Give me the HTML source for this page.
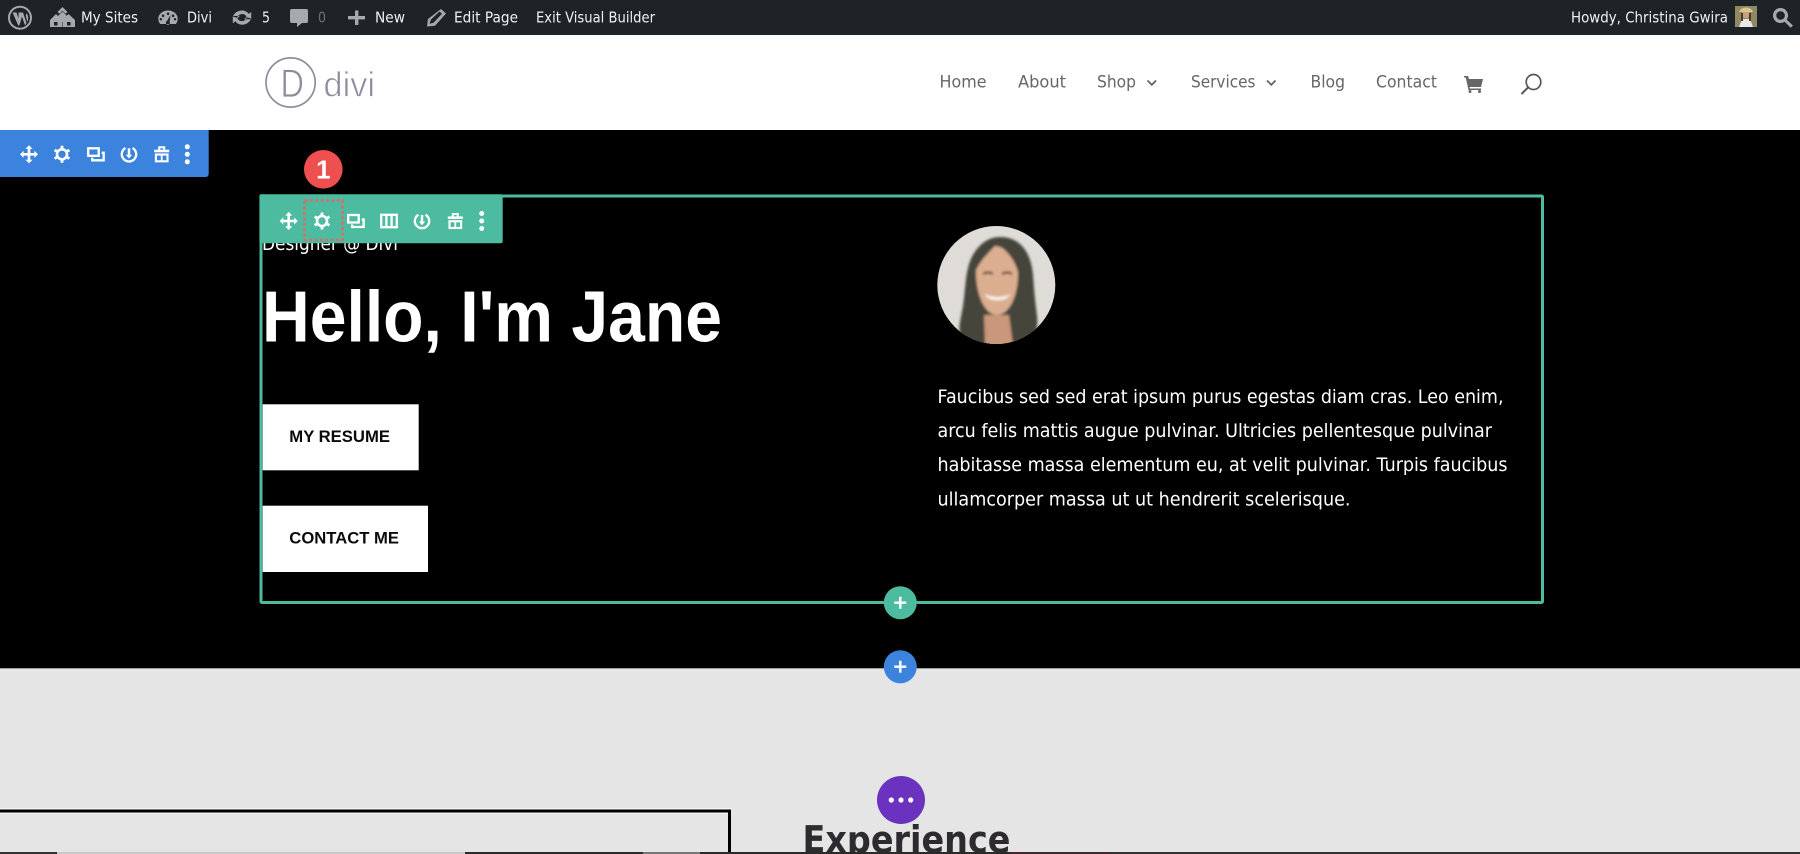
<!DOCTYPE html>
<html lang="en"><head><meta charset="utf-8"><title>Divi Visual Builder</title>
<style>
html,body{margin:0;padding:0;background:#e6e5e6;width:1800px;height:854px;overflow:hidden}
svg{display:block;position:absolute;left:0;top:0}
text{font-family:"DejaVu Sans","Liberation Sans",sans-serif}
.lib{font-family:"Liberation Sans",sans-serif}
.ab{font-size:15px;fill:#f0f0f1}
.nav{font-size:17px;fill:#666}
.p{font-size:19px;fill:#fff}
.ic{fill:none;stroke:#fff;stroke-width:2.3}
</style></head><body>
<svg width="1800" height="854" viewBox="0 0 1800 854" xmlns="http://www.w3.org/2000/svg">
<defs>
<g id="mv"><path d="M-6 0H6M0-6V6" stroke="#fff" stroke-width="2.6" fill="none"/><path fill="#fff" d="M-9 0l3.6-3.6v7.2zM9 0L5.400-3.600v7.200zM0-9L-3.600-5.400h7.200zM0 9L-3.600 5.400h7.200z"/></g>
<g id="gr"><circle r="5" class="ic" style="stroke-width:2.600"/><path stroke="#fff" stroke-width="2.800" d="M0-8.500V-5M0 8.500V5M-7.400-4.300L-4.300-2.500M7.400-4.300L4.300-2.500M-7.400 4.300L-4.300 2.500M7.400 4.300L4.300 2.500"/></g>
<g id="cp" class="ic"><rect x="-7.500" y="-6" width="10.500" height="7.500"/><path d="M6-1.500H8V6H-3.500V3.500"/></g>
<g id="cl" class="ic"><rect x="-7.800" y="-6.200" width="15.600" height="12.400"/><path d="M-2.600-6V6M2.600-6V6"/></g>
<g id="pw"><path class="ic" d="M-3.500-6.300A7.200 7.200 0 1 0 3.500-6.300"/><path d="M0-6V1" stroke="#fff" stroke-width="2.500"/><path d="M-3.200 0.500H3.200L0 4.200z" fill="#fff"/></g>
<g id="tr"><path d="M-7.500-3.300H7.500" stroke="#fff" stroke-width="2.600"/><path d="M-2.500-4V-7H2.500V-4" class="ic" style="stroke-width:2"/><rect x="-5.800" y="0.200" width="11.600" height="6.800" class="ic" style="stroke-width:2.100"/><path d="M0 0V7" stroke="#fff" stroke-width="1.800"/></g>
<g id="dt" fill="#fff"><circle cy="-7.500" r="2.500"/><circle r="2.500"/><circle cy="7.500" r="2.500"/></g>
<clipPath id="av"><circle cx="996.300" cy="285" r="59"/></clipPath>
<filter id="sf" x="-10%" y="-10%" width="120%" height="120%"><feGaussianBlur stdDeviation="1.300"/></filter>
</defs>

<!-- page -->
<rect width="1800" height="854" fill="#e6e5e6"/>
<rect y="35" width="1800" height="95" fill="#fff"/>
<rect y="130" width="1800" height="538.300" fill="#000"/>
<rect width="1800" height="35" fill="#1d2327"/>

<!-- admin bar icons -->
<g fill="#a7aaad">
<circle cx="20" cy="17.700" r="11" fill="none" stroke="#a7aaad" stroke-width="2"/>
<path d="M12.500 12.500h4l3.500 11-1.500 2.500zM18.500 12.500h4.500l3.500 10.500-1.500 2.500-3-9-2.500 8.500-1 .5zM26.500 13c2 3 2.200 6 .8 9l-1.500-6.500z"/>
<path d="M62.500 7l5 5-2 1.800-3-3-3 3-2-1.800z"/>
<path d="M50 20l6-6 6 6v7H50z"/><path d="M62.500 20l6-6 6.500 6v7H62.500z"/><path d="M57 17l5.500-5.500 5.500 5.500-5.500 5z"/>
<rect x="54" y="22" width="3.500" height="3.500" fill="#1d2327"/><rect x="67" y="22" width="3.500" height="3.500" fill="#1d2327"/>
<path fill-rule="evenodd" d="M168 10.500a9.700 8 0 0 1 9.700 8c0 2.500-.8 4.200-2 5.500h-15.400c-1.200-1.300-2-3-2-5.500a9.700 8 0 0 1 9.700-8zM163 14.500a1.300 1.300 0 1 0 .1 0zM168 12.500a1.300 1.300 0 1 0 .1 0zM173 14.500a1.300 1.300 0 1 0 .1 0zM160.800 18a1.200 1.200 0 1 0 .1 0zM175 18a1.200 1.200 0 1 0 .1 0zM170.500 15l-3.500 6a2 2 0 1 0 2.600.8z"/>
<path fill-rule="evenodd" d="M242 10.500c2.800 0 5.200 1.300 6.600 3.400l2.600-1.900v7.200h-7l2.400-2.200a5 5 0 0 0-9.400.8l-4.200-1c1-3.700 4.600-6.300 9-6.300zM242 24.700c-2.800 0-5.200-1.300-6.600-3.400l-2.600 1.900v-7.200h7l-2.400 2.200a5 5 0 0 0 9.400-.8l4.200 1c-1 3.700-4.600 6.300-9 6.300z"/>
<path d="M292 9h14a2 2 0 0 1 2 2v10a2 2 0 0 1-2 2h-4l-5 4v-4h-5a2 2 0 0 1-2-2V11a2 2 0 0 1 2-2z"/>
<path d="M355 10.500h3.400v5.500h6.600v3.400h-6.600v5.600H355v-5.600h-7V16h7z"/>
<path fill-rule="evenodd" d="M441 9l5 4.500-11 12.200-8 .8 1-7.500zM431 19.500l-1.500 4.200 4-1 8.500-9-2.500-2.200z"/>
<path d="M1780.500 8a7.500 7.500 0 0 1 6.200 11.700l6.300 5.800-2.300 2.200-6-6A7.500 7.500 0 1 1 1780.500 8zm0 3.200a4.300 4.300 0 1 0 .1 0z" fill-rule="evenodd"/>
</g>
<text class="ab" x="81" y="22.700" textLength="57" lengthAdjust="spacingAndGlyphs">My Sites</text>
<text class="ab" x="187" y="22.700" textLength="25" lengthAdjust="spacingAndGlyphs">Divi</text>
<text class="ab" x="262" y="22.700" textLength="8" lengthAdjust="spacingAndGlyphs">5</text>
<text class="ab" x="318" y="22.700" textLength="8" lengthAdjust="spacingAndGlyphs" style="fill:#6c7175">0</text>
<text class="ab" x="375" y="22.700" textLength="30" lengthAdjust="spacingAndGlyphs">New</text>
<text class="ab" x="454" y="22.700" textLength="64" lengthAdjust="spacingAndGlyphs">Edit Page</text>
<text class="ab" x="536" y="22.700" textLength="119" lengthAdjust="spacingAndGlyphs">Exit Visual Builder</text>
<text class="ab" x="1571" y="22.700" textLength="157" lengthAdjust="spacingAndGlyphs">Howdy, Christina Gwira</text>
<rect x="1735" y="6" width="22" height="21" fill="#8f8a62"/>
<path d="M1739 27l3-8h8l3 8z" fill="#e8e8ea"/><circle cx="1746" cy="14" r="4.200" fill="#c99f7d"/><path d="M1739 12c2-6 12-6 14 0z" fill="#d9c58e"/><path d="M1741 13v8h2v-8zM1749 13v8h2v-8z" fill="#4a3a2c"/>

<!-- logo -->
<circle cx="290.600" cy="82.500" r="24.600" fill="none" stroke="#8d8f9f" stroke-width="1.700"/>
<text class="lib" x="280.500" y="97.200" font-size="40" fill="#8d8f9f" stroke="#fff" stroke-width=".7" textLength="23.500" lengthAdjust="spacingAndGlyphs">D</text>
<text class="lib" x="323.500" y="96.700" font-size="35" fill="#8d8f9f" stroke="#fff" stroke-width=".7" textLength="51.500" lengthAdjust="spacingAndGlyphs">divi</text>

<!-- nav -->
<text class="nav" x="939.500" y="87.700" textLength="47" lengthAdjust="spacingAndGlyphs">Home</text>
<text class="nav" x="1018" y="87.700" textLength="48" lengthAdjust="spacingAndGlyphs">About</text>
<text class="nav" x="1097" y="87.700" textLength="39" lengthAdjust="spacingAndGlyphs">Shop</text>
<path d="M1147.500 80.500l4.300 4.300 4.300-4.300" fill="none" stroke="#666" stroke-width="1.800"/>
<text class="nav" x="1191" y="87.700" textLength="64.500" lengthAdjust="spacingAndGlyphs">Services</text>
<path d="M1267 80.500l4.300 4.300 4.300-4.300" fill="none" stroke="#666" stroke-width="1.800"/>
<text class="nav" x="1310.500" y="87.700" textLength="34.500" lengthAdjust="spacingAndGlyphs">Blog</text>
<text class="nav" x="1376" y="87.700" textLength="61" lengthAdjust="spacingAndGlyphs">Contact</text>
<path fill="#666" d="M1464 76h4l1 3h14l-2 8h-11.500l.4 1.500H1481v1.500h-12.500l-2.800-12.500H1464z"/><circle cx="1470" cy="91.500" r="1.500" fill="#666"/><circle cx="1479.500" cy="91.500" r="1.500" fill="#666"/>
<ellipse cx="1533.500" cy="82" rx="7.300" ry="7.500" fill="none" stroke="#555" stroke-width="1.700"/><path d="M1528 87.500l-6.500 6.500" stroke="#555" stroke-width="2"/>

<!-- hero -->
<text class="p" x="262" y="250" textLength="136" lengthAdjust="spacingAndGlyphs">Designer @ Divi</text>
<text class="lib" x="262" y="341.700" font-size="72" font-weight="700" fill="#fff" textLength="460" lengthAdjust="spacingAndGlyphs">Hello, I'm Jane</text>
<rect x="262.700" y="404.300" width="156" height="66" fill="#fff"/>
<rect x="262.700" y="505.700" width="165.300" height="66.300" fill="#fff"/>
<text class="lib" x="289.300" y="442" font-size="16.500" font-weight="700" fill="#0a0a0a" textLength="100.700" lengthAdjust="spacingAndGlyphs">MY RESUME</text>
<text class="lib" x="289.300" y="543.700" font-size="16.500" font-weight="700" fill="#0a0a0a" textLength="109.700" lengthAdjust="spacingAndGlyphs">CONTACT ME</text>

<!-- avatar -->
<g clip-path="url(#av)">
<rect x="930" y="220" width="140" height="130" fill="#dfdcd8"/>
<g filter="url(#sf)">
<path d="M955 335c3-8 20-10 42-10s38 4 45 12l-4 14h-80z" fill="#e6e0da"/>
<path d="M960 340c-2-14 1-22 3-34 2-12 2-26 5-38 4-17 16-31 32-31 20 0 31 15 33 38 1 14 2 26 4 40 1 11 0 18-6 24-8 8-16 10-34 10-16 0-30-2-37-9z" fill="#45443a"/>
<path d="M984 315h25l4 30-14 5-14-6z" fill="#c9977a"/>
<path d="M976 272c0-15 8-24 20-26 10 2 22 10 22 28 0 22-9 41-21 41-13 0-21-22-21-43z" fill="#dcae90"/>
<path d="M976 270c5-10 13-18 19-24l-10-2-9 12zM1018 272c-4-14-12-22-20-27 8-1 14 2 18 8z" fill="#45443a"/>
<path d="M983 274c3-2 7-2 10 0M1002 274c3-2 7-2 10 0" stroke="#5a4436" stroke-width="2.200" fill="none"/>
<path d="M985 294c8 4 18 4 25 0-2 8-22 9-25 0z" fill="#f7f2ee"/>
</g>
</g>

<!-- paragraph -->
<text class="p" x="937.500" y="403" textLength="566" lengthAdjust="spacingAndGlyphs">Faucibus sed sed erat ipsum purus egestas diam cras. Leo enim,</text>
<text class="p" x="937.500" y="437" textLength="554.500" lengthAdjust="spacingAndGlyphs">arcu felis mattis augue pulvinar. Ultricies pellentesque pulvinar</text>
<text class="p" x="937.500" y="471" textLength="570" lengthAdjust="spacingAndGlyphs">habitasse massa elementum eu, at velit pulvinar. Turpis faucibus</text>
<text class="p" x="937.500" y="505.400" textLength="413" lengthAdjust="spacingAndGlyphs">ullamcorper massa ut ut hendrerit scelerisque.</text>

<!-- row outline -->
<rect x="261" y="196" width="1281.500" height="406.500" fill="none" stroke="#4dbb9f" stroke-width="3" rx="1"/>

<!-- section toolbar -->
<path d="M0 130H208.700V174a3 3 0 0 1-3 3H0z" fill="#3c83de"/>
<use href="#mv" x="29" y="154.300"/><use href="#gr" x="62" y="154.300"/><use href="#cp" x="95.700" y="154.300"/><use href="#pw" x="129" y="154.300"/><use href="#tr" x="161.700" y="154.300"/><use href="#dt" x="187.300" y="154.300"/>

<!-- row toolbar -->
<rect x="259.400" y="194.300" width="243.300" height="49" rx="2" fill="#4dbb9f"/>
<use href="#mv" x="288.700" y="221"/><use href="#gr" x="322" y="221"/><use href="#cp" x="355.700" y="221"/><use href="#cl" x="389" y="221"/><use href="#pw" x="422" y="221"/><use href="#tr" x="455.300" y="221"/><use href="#dt" x="481.700" y="221"/>
<rect x="304.500" y="200.500" width="38" height="39.500" fill="none" stroke="#df6a66" stroke-width="2.600" stroke-dasharray="2.800 2.600"/>
<circle cx="323.300" cy="169.300" r="19.300" fill="#ee5050"/>
<text class="lib" x="323.300" y="178.500" font-size="26" font-weight="700" fill="#fff" text-anchor="middle">1</text>

<!-- plus buttons -->
<circle cx="900.300" cy="602.700" r="16.500" fill="#4dbb9f"/>
<path d="M894.300 602.700h12M900.300 596.700v12" stroke="#fff" stroke-width="2.400"/>
<circle cx="900.300" cy="668" r="16.500" fill="#cfe0f7" opacity=".8"/>
<circle cx="900.300" cy="666.700" r="16.500" fill="#3c83de"/>
<path d="M894.300 666.700h12M900.300 660.700v12" stroke="#fff" stroke-width="2.400"/>

<!-- lower section -->
<path d="M0 811H729.500V853" fill="none" stroke="#000" stroke-width="3"/>
<path d="M0 808.800H731.500M0 813.200H727.500" stroke="#fafafa" stroke-width="1"/>
<text x="802.500" y="852.500" font-size="37" font-weight="700" fill="#2e2b30" textLength="208" lengthAdjust="spacingAndGlyphs">Experience</text>
<circle cx="901" cy="800" r="24" fill="#6a32bf"/>
<circle cx="891.300" cy="800" r="2.600" fill="#fff"/><circle cx="901" cy="800" r="2.600" fill="#fff"/><circle cx="910.700" cy="800" r="2.600" fill="#fff"/>

<!-- bottom strip -->
<rect y="852" width="57" height="2" fill="#333"/>
<rect x="57" y="852" width="408" height="2" fill="#c9c9c9"/>
<rect x="465" y="852" width="178" height="2" fill="#2a2a2a"/>
<rect x="643" y="852" width="57" height="2" fill="#777"/>
<rect x="700" y="852" width="310" height="2" fill="#2a2a2a"/>
<rect x="1010" y="852" width="100" height="2" fill="#43262f"/>
<rect x="1110" y="852" width="690" height="2" fill="#333"/>
</svg>
</body></html>
